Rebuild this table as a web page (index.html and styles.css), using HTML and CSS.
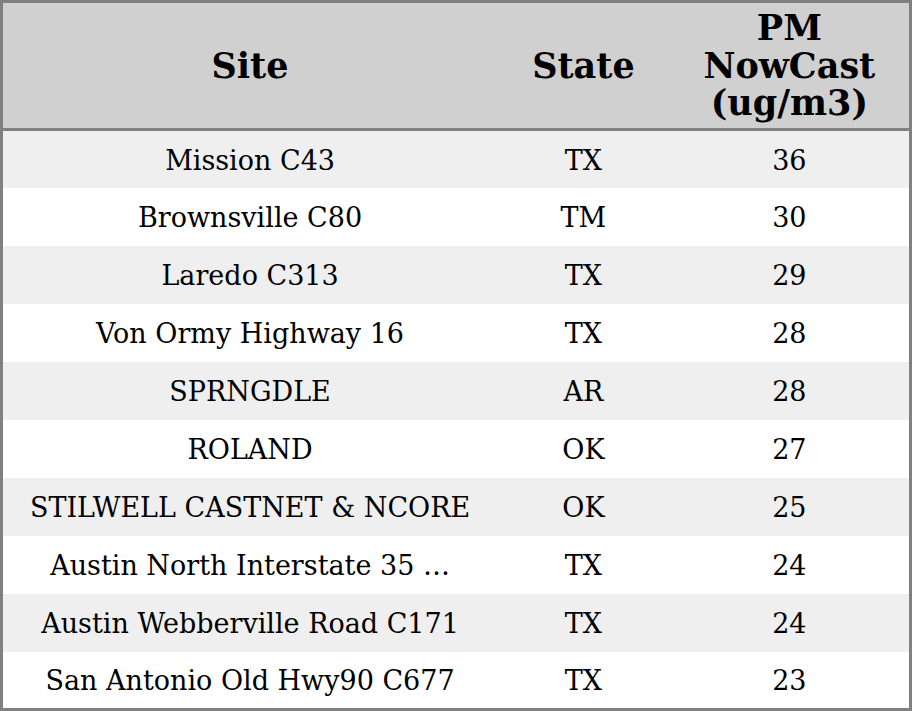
FILE: index.html
```html
<!DOCTYPE html>
<html>
<head>
<meta charset="utf-8">
<link rel="stylesheet" href="styles.css">
</head>
<body>
<table class="grid">
  <colgroup>
    <col class="c-site">
    <col class="c-state">
    <col class="c-pm">
  </colgroup>
  <thead>
    <tr><th>Site</th><th>State</th><th>PM<br>NowCast<br>(ug/m3)</th></tr>
  </thead>
  <tbody>
    <tr><td>Mission C43</td><td>TX</td><td>36</td></tr>
    <tr><td>Brownsville C80</td><td>TM</td><td>30</td></tr>
    <tr><td>Laredo C313</td><td>TX</td><td>29</td></tr>
    <tr><td>Von Ormy Highway 16</td><td>TX</td><td>28</td></tr>
    <tr><td>SPRNGDLE</td><td>AR</td><td>28</td></tr>
    <tr><td>ROLAND</td><td>OK</td><td>27</td></tr>
    <tr><td>STILWELL CASTNET &amp; NCORE</td><td>OK</td><td>25</td></tr>
    <tr><td>Austin North Interstate 35 …</td><td>TX</td><td>24</td></tr>
    <tr><td>Austin Webberville Road C171</td><td>TX</td><td>24</td></tr>
    <tr><td>San Antonio Old Hwy90 C677</td><td>TX</td><td>23</td></tr>
  </tbody>
</table>
</body>
</html>
```
FILE: styles.css
```css
html, body {
  margin: 0;
  padding: 0;
  background: #ffffff;
}
.grid {
  width: 912px;
  height: 711px;
  border-collapse: collapse;
  border: 3px solid #808080;
  font-family: "DejaVu Serif", serif;
  color: #000;
  table-layout: fixed;
}
.c-site { width: 494px; }
.c-state { width: 172px; }
.c-pm { width: 240px; }
.grid th {
  background: #d0d0d0;
  font-size: 35px;
  font-weight: bold;
  line-height: 37.5px;
  height: 125px;
  padding: 0;
  text-align: center;
  vertical-align: middle;
  border-bottom: 3px solid #808080;
}
.grid td {
  font-size: 27px;
  height: 57.7px;
  padding: 2px 0 0 0;
  box-sizing: border-box;
  text-align: center;
  vertical-align: middle;
  white-space: nowrap;
}
.grid tbody tr:nth-child(odd) { background: #efefef; }
.grid tbody tr:nth-child(even) { background: #ffffff; }
```
